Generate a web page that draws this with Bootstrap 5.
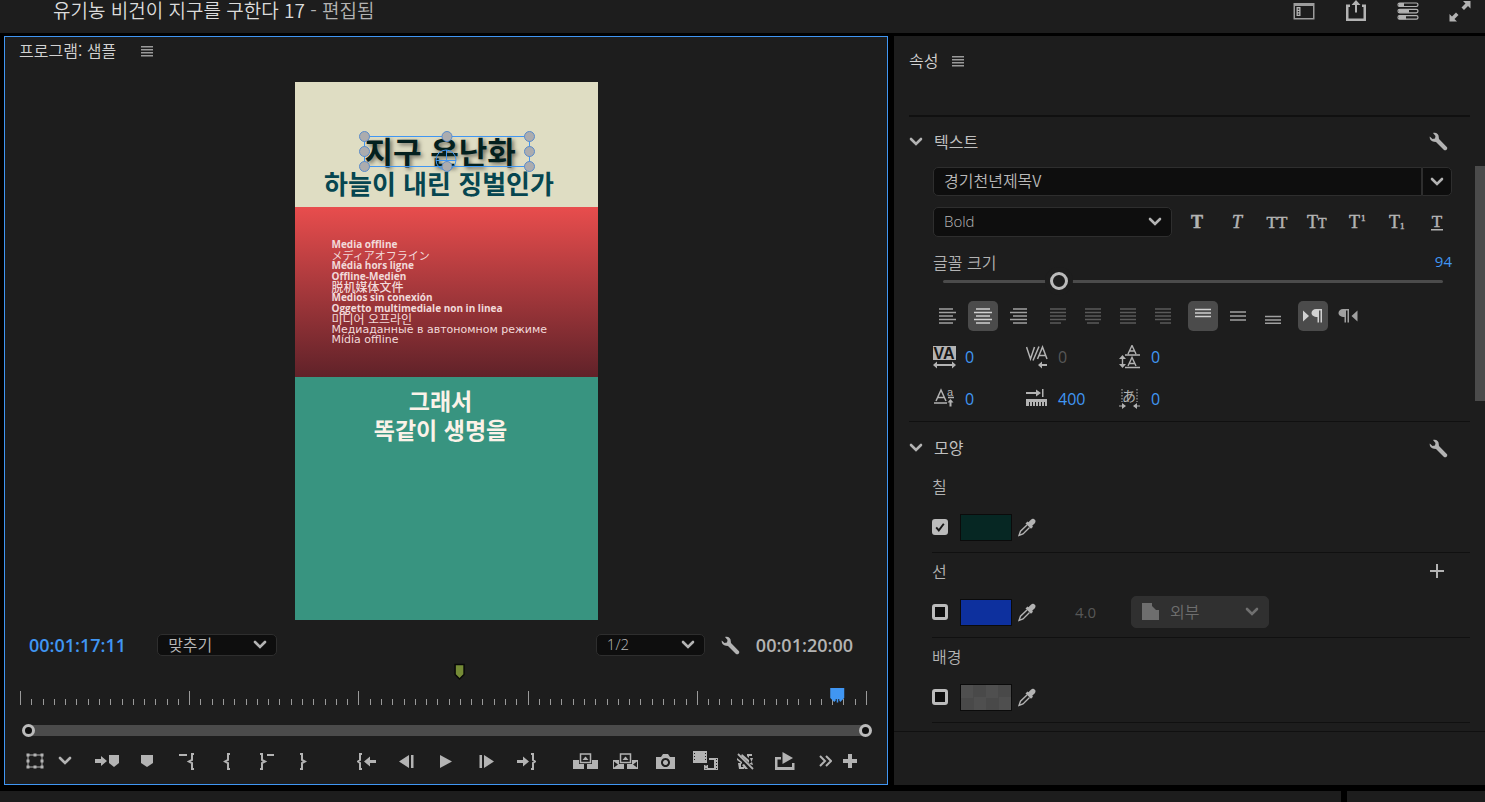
<!DOCTYPE html>
<html lang="ko" data-bs-theme="dark">
<head>
<meta charset="utf-8">
<meta name="viewport" content="width=device-width, initial-scale=1">
<title>유기농 비건이 지구를 구한다 17</title>
<link href="https://cdn.jsdelivr.net/npm/bootstrap@5.3.0/dist/css/bootstrap.min.css" rel="stylesheet">
<style>
  :root { --panel: #1d1d1d; --well: #0e0e0e; --line: #101010; --ink: #b3b3b3; --accent: #4096f3; --bar: #4b4b4b; }
  body { background: #000; color: var(--ink); font: 16px/24px "Noto Sans CJK KR", sans-serif; min-height: 100vh; }
  svg { display: block; fill: currentColor; }
  .stroke { fill: none; stroke: currentColor; }
  .pane { background: var(--panel); }
  .latin { font-family: "Open Sans", "Noto Sans CJK KR", sans-serif; }
  .blue { color: var(--accent); }

  .topbar { height: 33px; padding: 0 14px 11px 53px; }
  .topbar h1 { font-size: 19px; line-height: 20px; font-weight: 350; margin: 0; padding-bottom: 2px; color: #dcdcdc; }
  .topbar h1 span { color: var(--ink); }
  .topbar nav { gap: 30px; }
  .icon-btn { background: none; border: 0; padding: 0; color: inherit; display: inline-flex; align-items: center; justify-content: center; }
  .topbar .icon-btn { width: 22px; height: 22px; }

  .workspace { display: grid; grid-template-columns: 884fr 591fr; gap: 6px; padding: 3px 0 6px 4px; }
  .program { border: 1px solid var(--accent); }
  .pane-title { font-size: 16px; line-height: 27px; font-weight: 350; margin: 0; color: #d2d2d2; }
  .pane-title .icon-btn { color: #9a9a9a; height: 29px; }
  .program .pane-title { padding-left: 14px; gap: 25px; }

  .viewer { padding-top: 16px; }
  .frame { width: 303px; color: #fbf2e8; font-weight: 700; text-align: center; }
  .sky { height: 125px; background: #dfddc3; color: #064650; padding-top: 54px; }
  .fire { height: 170px; background: linear-gradient(#e84d4d, #602229); padding: 32px 0 0 37px; text-align: left; }
  .sea { height: 243px; background: #389480; padding: 9px 11px 0 0; font-size: 23px; line-height: 29px; }
  .picked { width: 165px; height: 31px; font-size: 31px; line-height: 29px; padding-left: 1px; color: #03201e; text-align: left; text-shadow: 2px 2px 4px #0008; white-space: nowrap; }
  .picked svg { left: -6px; top: -6px; }
  .subtitle { font-size: 26px; line-height: 32px; padding-right: 14px; }
  .offline { display: grid; grid-template-rows: repeat(10, 1fr); height: 107px; font: 700 10px/10px "Open Sans", sans-serif; color: #f2dada; margin: 0; }
  .offline .cjk { font-family: "Noto Sans CJK JP", sans-serif; font-size: 11px; font-weight: 400; }
  .offline .hans { font-family: "Noto Sans CJK SC", sans-serif; font-size: 12px; font-weight: 500; }
  .offline .hangul { font-family: "Noto Sans CJK KR", sans-serif; font-size: 12px; font-weight: 400; }
  .offline .wide { font: 400 11px/10px "DejaVu Sans", sans-serif; }

  .transport { padding: 0 34px 0 24px; height: 28px; margin-top: 10px; }
  .timecode { font: 600 18px/24px "Open Sans", sans-serif; }
  .pick { background-color: var(--well); border: 1px solid #2e2e2e; border-radius: 5px; color: #b8b8b8; font-size: 16px; font-weight: 350; line-height: 18px; padding: 0 32px 2px 10px;
    background-image: url("data:image/svg+xml,%3Csvg xmlns='http://www.w3.org/2000/svg' viewBox='0 0 14 10'%3E%3Cpath d='M2 2l5 5 5-5' fill='none' stroke='%23b3b3b3' stroke-width='2.6' stroke-linecap='round'/%3E%3C/svg%3E"); background-size: 14px 10px; background-position: right 9px center; }
  .fit { width: 120px; height: 22px; margin-left: 31px; }
  .res { width: 109px; height: 22px; font-size: 15px; }
  .style-pick { flex: 1; height: 30px; font-size: 15px; }
  .outer-pick { width: 138px; height: 32px; padding-left: 38px; }
  .outer-pick:disabled { background-color: #303030; border-color: #303030; color: #6e6e6e; opacity: 1;
    background-image: url("data:image/svg+xml,%3Csvg xmlns='http://www.w3.org/2000/svg' viewBox='0 0 14 10'%3E%3Cpath d='M2 2l5 5 5-5' fill='none' stroke='%23707070' stroke-width='2.6' stroke-linecap='round'/%3E%3C/svg%3E"); }
  .outer-icon { left: 11px; top: 7px; color: #6e6e6e; }

  .timeline { padding: 5px 21px 0 15px; }
  .ruler { overflow: visible; }
  .zoombar { height: 11px; background: var(--bar); margin: 20px 0 0 8px; }
  .zoombar button { width: 13px; height: 13px; border: 3px solid #bbb; border-radius: 50%; background: var(--well); padding: 0; top: -1px; }
  .zoombar .from { left: -6px; }
  .zoombar .to { right: -6px; }
  .tools { display: grid; grid-template-columns: 1fr auto 1fr; padding: 10px 0 8px; }
  .tools .icon-btn { width: 40px; height: 30px; }
  .tools .w30 { width: 30px; }
  .tools .w32 { width: 32px; }
  .tools .w18 { width: 18px; }
  .start { padding-left: 15px; }
  .start .w30 + .icon-btn:not(.w30) { margin-left: 7px; }
  .end { padding-left: 19px; }

  .props { min-width: 0; }
  .props-body { padding: 11px 5px 0 15px; }
  .props .pane-title { gap: 14px; height: 68px; align-items: flex-start; }
  .rule { height: 1px; background: var(--line); }
  .rule.thick { height: 2px; }
  .sect { padding: 0 22px 0 0; color: #c0c0c0; }
  .sect svg { color: var(--ink); }
  .sect h3 { font-size: 16px; line-height: 22px; font-weight: 400; color: inherit; margin: 0 auto 2px 11px; }
  .sect-text { height: 49px; }
  .sect-look { height: 52px; }
  .fields { padding: 1px 18px 0 24px; }
  .font-name { height: 29px; }
  .font-name .form-control { background: var(--well); border: 1px solid #2e2e2e; border-radius: 5px 0 0 5px; color: #b8b8b8; font-size: 16px; font-weight: 350; line-height: 20px; padding: 0 10px 3px; height: 29px; }
  .font-name .icon-btn { width: 30px; background: var(--well); border: 1px solid #2e2e2e; border-radius: 0 5px 5px 0; }
  .style-row { margin: 11px -5px 0 0; gap: 5px; }
  .style-row > div { font-family: "Liberation Serif", serif; }
  .style-row .icon-btn { width: 40px; height: 30px; }
  .thin-t text { stroke: currentColor; stroke-width: .5px; }
  .label { font-weight: 350; line-height: 24px; }
  .size-row { margin-top: 13px; }
  .num { font: 400 16px/22px "Open Sans", sans-serif; }
  .num.sm15 { font-size: 15px; }
  .range-wrap { padding: 0 9px 0 10px; height: 18px; margin-top: -2px; }
  .range-wrap input { appearance: none; width: 100%; height: 18px; background: none; margin: 0; display: block; }
  .range-wrap input::-webkit-slider-runnable-track { height: 3px; background: var(--bar); border-radius: 2px; }
  .range-wrap input::-webkit-slider-thumb { appearance: none; width: 18px; height: 18px; margin-top: -8px; border-radius: 50%; border: 3px solid #bbb; background: var(--panel); box-shadow: 0 0 0 5px var(--panel); }
  .aligns { gap: 10px; margin-top: 11px; }
  .aligns > div { display: flex; gap: 5px; }
  .aligns .icon-btn { width: 30px; height: 30px; border-radius: 5px; color: #a0a0a0; }
  .aligns .icon-btn.active { background: var(--bar); color: #d0d0d0; }
  .aligns .icon-btn:disabled { color: #5a5a5a; }
  .metrics { display: grid; grid-template-columns: repeat(3, 93px); row-gap: 18px; margin: 14px 0 10px; }
  .metrics > div { display: flex; align-items: center; gap: 8px; height: 24px; }
  .off { color: #575757; }
  .looks { padding-left: 23px; }
  .look { height: 84px; padding-right: 18px; }
  .look:first-child { height: 78px; }
  .look h4 { font-size: 16px; line-height: 24px; font-weight: 350; color: inherit; margin: 0; }
  .look-row { height: 32px; margin: 13px 0 9px; }
  .stroke-width { margin: 0 35px 0 39px; }
  .tick { appearance: none; width: 16px; height: 16px; border: 3px solid #bbb; border-radius: 3px; background: var(--well); margin: 0; }
  .tick:checked { background: #bbb url("data:image/svg+xml,%3Csvg xmlns='http://www.w3.org/2000/svg' viewBox='0 0 10 10'%3E%3Cpath d='M1.2 5.4l2.600 3 5-6.600' fill='none' stroke='%23181818' stroke-width='1.900'/%3E%3C/svg%3E") center / 10px 10px no-repeat; }
  .swatch { width: 52px; height: 27px; border: 1px solid #0b0b0b; padding: 0; margin: 0 6px 0 12px; border-radius: 0; }
  .green { background: #062723; }
  .royal { background: #0d309e; }
  .clear { background: repeating-conic-gradient(#494949 0 25%, #4f4f4f 0 50%) 0 0 / 25px 25px; }
  .scroller { width: 10px; height: 235px; margin-top: 130px; background: var(--bar); }
  .strip { height: 11px; gap: 6px; }
  .strip div:last-child { width: 138px; }
</style>
</head>
<body class="d-flex flex-column">

<svg class="d-none" xmlns="http://www.w3.org/2000/svg">
  <symbol id="menu" viewBox="0 0 12 11"><path d="M0 0h12v1.500H0zM0 3h12v1.500H0zM0 6h12v1.500H0zM0 9h12v1.500H0z"/></symbol>
  <symbol id="chev" viewBox="0 0 14 10"><path d="M2 2l5 5 5-5" fill="none" stroke="currentColor" stroke-width="2.600" stroke-linecap="round"/></symbol>
  <symbol id="wrench" viewBox="0 0 19 19"><path d="M4 1C7 0 10 2 9.800 5.500L10 7l8 8.200c1 1.800-1.200 4-3 2.800L7 10 5 9.700C2 9.500.200 7 .800 4.500L3.500 7 6 6.500l.500-2.500z"/></symbol>
  <symbol id="dropper" viewBox="0 0 18 19"><path d="M10.500 4.200C13 1.500 14 .300 15.800 1c2.500 1 2 3.500.200 5l-1.800 1.800.800 1-2 2L7.500 5.500l2-2z"/><path d="M9 7L2.500 13.200 1 17.500l4-1.500L11.500 9.500" fill="none" stroke="currentColor" stroke-width="1.400"/></symbol>
</svg>

<header class="topbar pane d-flex align-items-center">
  <h1 class="me-auto">유기농 비건이 지구를 구한다 17 <span>- 편집됨</span></h1>
  <nav class="d-flex" aria-label="작업 영역">
    <button class="icon-btn" aria-label="작업 영역"><svg width="22" height="18"><path d="M.500 1h21v16.500H.500zM2 4v12h18V4z" fill-rule="evenodd" opacity=".85"/><path d="M3.500 5h4v9h-4zM4.800 6.500v1.200h1.400V6.500zM4.800 9v1.200h1.400V9zM4.800 11.500v1.200h1.400v-1.200z" fill-rule="evenodd"/></svg></button>
    <button class="icon-btn" aria-label="내보내기"><svg width="22" height="22"><path d="M5 4.500H1v16.500h20V4.500h-4V7h1.500v11.500h-15V7H5z"/><path d="M10 12.500V5H6.500L11 0l4.500 5H12v7.500z"/></svg></button>
    <button class="icon-btn" aria-label="진행률"><svg width="22" height="20"><g class="stroke" stroke-width="1.200"><rect x="1" y="2" width="20" height="3.500" rx="1.700"/><rect x="1" y="8.300" width="20" height="3.500" rx="1.700"/><rect x="1" y="14.700" width="20" height="3.500" rx="1.700"/></g><path d="M2 2h5v3.500H2zM2 8.300h10v3.500H2zM2 14.700h7v3.500H2z"/></svg></button>
    <button class="icon-btn" aria-label="전체 화면"><svg width="22" height="22"><path d="M14 1h7.500v7.500L19 6l-4 4-2.500-2.500 4-4zM.500 21.500V14L3 16.500l4-4L9.500 15l-4 4L8 21.500z"/></svg></button>
  </nav>
</header>

<main class="workspace flex-grow-1">
  <section class="program pane d-flex flex-column">
    <h2 class="pane-title d-flex">프로그램: 샘플 <button class="icon-btn" aria-label="패널 메뉴"><svg width="12" height="11"><use href="#menu"/></svg></button></h2>

    <div class="viewer flex-grow-1 d-flex justify-content-center align-items-start">
      <div class="frame">
        <div class="sky">
          <div class="picked position-relative mx-auto">지구 온난화
            <svg class="position-absolute" width="178" height="43">
              <g fill="none" stroke="#4096f3" stroke-width="1"><rect x="6.500" y="6.500" width="165" height="30"/><circle cx="88" cy="30" r="10"/><path d="M78 30.500h20M88.500 20v20"/></g>
              <g fill="#acacae" stroke="#5a8ccc" stroke-width="1"><circle cx="6.500" cy="6.500" r="5"/><circle cx="89" cy="6.500" r="5"/><circle cx="171.500" cy="6.500" r="5"/><circle cx="6.500" cy="21.500" r="5"/><circle cx="171.500" cy="21.500" r="5"/><circle cx="6.500" cy="36.500" r="5"/><circle cx="89" cy="36.500" r="5"/><circle cx="171.500" cy="36.500" r="5"/></g>
            </svg>
          </div>
          <div class="subtitle">하늘이 내린 징벌인가</div>
        </div>
        <div class="fire"><div class="offline text-nowrap">
          <span>Media offline</span><span class="cjk" lang="ja">メディアオフライン</span><span>Média hors ligne</span><span>Offline-Medien</span><span class="hans" lang="zh">脱机媒体文件</span><span>Medios sin conexión</span><span>Oggetto multimediale non in linea</span><span class="hangul">미디어 오프라인</span><span class="wide" lang="ru">Медиаданные в автономном режиме</span><span class="wide">Mídia offline</span>
        </div></div>
        <div class="sea">그래서<br>똑같이 생명을</div>
      </div>
    </div>

    <div class="transport d-flex align-items-center">
      <span class="timecode blue">00:01:17:11</span>
      <select class="form-select pick fit" aria-label="확대/축소"><option>맞추기</option></select>
      <select class="form-select pick res latin ms-auto" aria-label="재생 해상도"><option>1/2</option></select>
      <button class="icon-btn mx-3" aria-label="설정"><svg width="19" height="19"><use href="#wrench"/></svg></button>
      <span class="timecode">00:01:20:00</span>
    </div>

    <div class="timeline">
      <svg class="ruler" width="100%" height="41" role="img" aria-label="시간 눈금자">
        <g id="ticks" fill="#9a9a9a" shape-rendering="crispEdges"></g>
        <svg x="51.900%" overflow="visible"><path d="M-4 .500h9v10L.500 15-4 10.500z" fill="#758b36" stroke="#080808" stroke-width="1.500"/></svg>
        <svg x="96.600%" y="23" overflow="visible"><path d="M-7 1h14v10l-4 4-1-1.500V12h-1v3.500h-1.500V12h-1v1.500L-3 15l-4-4z" fill="#4096f3"/></svg>
      </svg>
      <div class="zoombar position-relative"><button class="from position-absolute" aria-label="시작"></button><button class="to position-absolute" aria-label="끝"></button></div>
    </div>

    <div class="tools">
      <div class="start d-flex">
        <button class="icon-btn w30" aria-label="변형"><svg width="18" height="16"><path d="M2 2h14v12H2z" class="stroke"/><path d="M.500.500h3v3h-3zM7.500.500h3v3h-3zM14.500.500h3v3h-3zM.500 6.500h3v3h-3zM14.500 6.500h3v3h-3zM.500 12.500h3v3h-3zM7.500 12.500h3v3h-3zM14.500 12.500h3v3h-3z"/></svg></button>
        <button class="icon-btn w30" aria-label="더 보기"><svg width="14" height="10"><use href="#chev"/></svg></button>
        <button class="icon-btn" aria-label="마커로 이동"><svg width="24" height="14"><path d="M0 5h6V2l6 5-6 5V9H0zM14 1h10v8l-5 4-5-4z"/></svg></button>
        <button class="icon-btn" aria-label="마커 추가"><svg width="12" height="14"><path d="M0 1h12v8l-6 4-6-4z"/></svg></button>
        <button class="icon-btn" aria-label="시작 지우기"><svg width="16" height="17"><path d="M0 2h8M15 1h-2v6l-3 1.500L13 10v6h2" class="stroke" stroke-width="2"/></svg></button>
        <button class="icon-btn" aria-label="시작 표시"><svg width="8" height="17"><path d="M7 1H5v6L2 8.500 5 10v6h2" class="stroke" stroke-width="2"/></svg></button>
        <button class="icon-btn" aria-label="종료 지우기"><svg width="16" height="17"><path d="M8 2h7M1 1h2v6l3 1.500L3 10v6H1" class="stroke" stroke-width="2"/></svg></button>
        <button class="icon-btn w32" aria-label="종료 표시"><svg width="8" height="17"><path d="M1 1h2v6l3 1.500L3 10v6H1" class="stroke" stroke-width="2"/></svg></button>
      </div>
      <div class="d-flex">
        <button class="icon-btn" aria-label="시작으로"><svg width="19" height="17"><path d="M5 1H3v6L1 8.500 3 10v6h2" class="stroke" stroke-width="2"/><path d="M19 7h-6V3.500L7 8.500l6 5V10h6z"/></svg></button>
        <button class="icon-btn" aria-label="이전 프레임"><svg width="15" height="13"><path d="M10 0v13L0 6.500zM12 0h2.500v13H12z"/></svg></button>
        <button class="icon-btn" aria-label="재생"><svg width="12" height="13"><path d="M0 0l12 6.500L0 13z"/></svg></button>
        <button class="icon-btn" aria-label="다음 프레임"><svg width="15" height="13"><path d="M5 0v13l10-6.500zM.500 0H3v13H.500z"/></svg></button>
        <button class="icon-btn" aria-label="종료로"><svg width="19" height="17"><path d="M14 1h2v6l2 1.500L16 10v6h-2" class="stroke" stroke-width="2"/><path d="M0 7h6V3.500l6 5-6 5V10H0z"/></svg></button>
      </div>
      <div class="end d-flex">
        <button class="icon-btn" aria-label="제거"><svg width="25" height="17"><path d="M0 7h6v4h5v5H0zM25 7h-6v4h-5v5h11z"/><path d="M7.500 1h10v8.500h-10z" class="stroke" stroke-width="1.500"/><path d="M12.500 3.500L15.500 7h-6z"/></svg></button>
        <button class="icon-btn" aria-label="추출"><svg width="25" height="17"><path d="M0 7h6v4h5v5H0zM25 7h-6v4h-5v5h11zM1 8.500v6L5 11.500zM24 8.500v6l-4-3z" fill-rule="evenodd"/><path d="M7.500 1h10v8.500h-10z" class="stroke" stroke-width="1.500"/><path d="M12.500 3.500L15.500 7h-6z"/></svg></button>
        <button class="icon-btn" aria-label="프레임 내보내기"><svg width="19" height="15"><path d="M0 3h5l2-3h5l2 3h5v12H0zM9.500 4a4.500 4.500 0 1 0 .010 0zM9.500 6a2.500 2.500 0 1 1-.010 0z" fill-rule="evenodd"/></svg></button>
        <button class="icon-btn" aria-label="비교 보기"><svg width="25" height="20"><path d="M0 0h14v12H0zM1 2v1h1V2zM1 5v1h1V5zM1 8v1h1V8zM12 2v1h1V2zM12 5v1h1V5zM12 8v1h1V8zM16 7h9v12H11v-5h4v3h6V9h-5z" fill-rule="evenodd"/><path d="M13 14v5M23.500 8v11" stroke="#1d1d1d" stroke-dasharray="1 2"/></svg></button>
        <button class="icon-btn" aria-label="프록시 전환"><svg width="17" height="17"><path d="M1 1l15 15" class="stroke" stroke-width="1.800"/><path d="M5 1l7 6v3L4 3zM0 5l5 4v2L0 7zM7 11l4 5H8l-3-4zM10 1h5v2h-3v2l-2-2zM13 5h3l-1.500 4zM1 10h3v4h3v2H2zM12 11l3-2 1 3z"/></svg></button>
        <button class="icon-btn" aria-label="루프"><svg width="20" height="18"><path d="M0 5h6v2.500H2.500v7.500h14.500v-4h2.500v7H0z"/><path d="M7.500 0L18 6 7.500 12z"/></svg></button>
        <button class="icon-btn w32 ms-1" aria-label="더 많은 도구"><svg width="13" height="12"><path d="M1 1l5 5-5 5M7 1l5 5-5 5" class="stroke" stroke-width="2"/></svg></button>
        <button class="icon-btn w18" aria-label="단추 편집기"><svg width="14" height="14"><path d="M5 0h4v5h5v4H9v5H5V9H0V5h5z"/></svg></button>
      </div>
    </div>
  </section>

  <section class="props pane d-flex flex-column">
    <div class="d-flex">
      <div class="props-body flex-grow-1">
        <h2 class="pane-title d-flex">속성 <button class="icon-btn" aria-label="패널 메뉴"><svg width="12" height="11"><use href="#menu"/></svg></button></h2>
        <div class="rule thick"></div>

        <div class="sect sect-text d-flex align-items-center">
          <svg width="14" height="10"><use href="#chev"/></svg><h3>텍스트</h3>
          <button class="icon-btn" aria-label="텍스트 설정"><svg width="19" height="19"><use href="#wrench"/></svg></button>
        </div>

        <div class="fields">
          <div class="font-name d-flex">
            <input class="form-control" type="text" value="경기천년제목V" aria-label="글꼴">
            <button class="icon-btn flex-shrink-0" aria-label="글꼴 목록"><svg width="14" height="10"><use href="#chev"/></svg></button>
          </div>
          <div class="style-row d-flex">
            <select class="form-select pick style-pick latin" aria-label="글꼴 스타일"><option>Bold</option></select>
            <div class="d-flex thin-t">
              <button class="icon-btn" aria-label="굵게"><svg width="22" height="18"><text x="11" y="15" font-size="18" font-weight="700" text-anchor="middle">T</text></svg></button>
              <button class="icon-btn" aria-label="기울임꼴"><svg width="22" height="18"><text x="11" y="15" font-size="18" font-style="italic" text-anchor="middle">T</text></svg></button>
              <button class="icon-btn" aria-label="모두 대문자"><svg width="24" height="18"><text x="12" y="15" font-size="17" text-anchor="middle">TT</text></svg></button>
              <button class="icon-btn" aria-label="작은 대문자"><svg width="24" height="18"><text x="2" y="15" font-size="18">T<tspan font-size="14">T</tspan></text></svg></button>
              <button class="icon-btn" aria-label="위 첨자"><svg width="22" height="18"><text x="3" y="15" font-size="18">T</text><text x="15" y="8" font-size="9">1</text></svg></button>
              <button class="icon-btn" aria-label="아래 첨자"><svg width="22" height="18"><text x="3" y="15" font-size="18">T</text><text x="14" y="16" font-size="9">1</text></svg></button>
              <button class="icon-btn" aria-label="밑줄"><svg width="22" height="18"><text x="11" y="14" font-size="17" text-anchor="middle">T</text><path d="M5 16h12v1.500H5z"/></svg></button>
            </div>
          </div>

          <div class="size-row d-flex justify-content-between"><label class="label" for="size">글꼴 크기</label><span class="num sm15 blue">94</span></div>
          <div class="range-wrap"><input id="size" type="range" min="0" max="1000" value="222"></div>

          <div class="aligns d-flex">
            <div>
              <button class="icon-btn" aria-label="왼쪽 맞춤"><svg width="18" height="16"><path d="M0 1h14M0 4.500h17M0 8h14M0 11.500h17M0 15h14" class="stroke" stroke-width="1.400"/></svg></button>
              <button class="icon-btn active" aria-label="가운데 맞춤"><svg width="18" height="16"><path d="M2 1h14M0 4.500h18M2 8h14M0 11.500h18M2 15h14" class="stroke" stroke-width="1.400"/></svg></button>
              <button class="icon-btn" aria-label="오른쪽 맞춤"><svg width="18" height="16"><path d="M4 1h14M1 4.500h17M4 8h14M1 11.500h17M4 15h14" class="stroke" stroke-width="1.400"/></svg></button>
            </div>
            <div>
              <button class="icon-btn" disabled aria-label="양쪽 맞춤 왼쪽"><svg width="16" height="16"><path d="M0 1h16M0 4.500h16M0 8h16M0 11.500h16M0 15h11" class="stroke" stroke-width="1.400"/></svg></button>
              <button class="icon-btn" disabled aria-label="양쪽 맞춤 가운데"><svg width="16" height="16"><path d="M0 1h16M0 4.500h16M0 8h16M0 11.500h16M2 15h12" class="stroke" stroke-width="1.400"/></svg></button>
              <button class="icon-btn" disabled aria-label="양쪽 맞춤"><svg width="16" height="16"><path d="M0 1h16M0 4.500h16M0 8h16M0 11.500h16M0 15h16" class="stroke" stroke-width="1.400"/></svg></button>
              <button class="icon-btn" disabled aria-label="양쪽 맞춤 오른쪽"><svg width="16" height="16"><path d="M0 1h16M0 4.500h16M0 8h16M0 11.500h16M5 15h11" class="stroke" stroke-width="1.400"/></svg></button>
            </div>
            <div>
              <button class="icon-btn active" aria-label="위"><svg width="16" height="16"><path d="M0 1.500h16M0 5h16M0 8.500h16" class="stroke" stroke-width="1.400"/></svg></button>
              <button class="icon-btn" aria-label="중간"><svg width="16" height="16"><path d="M0 4h16M0 8h16M0 12h16" class="stroke" stroke-width="1.500"/></svg></button>
              <button class="icon-btn" aria-label="아래"><svg width="16" height="16"><path d="M0 8.500h16M0 12h16M0 15.300h16" class="stroke" stroke-width="1.500"/></svg></button>
            </div>
            <div>
              <button class="icon-btn active" aria-label="왼쪽에서 오른쪽"><svg width="20" height="14"><path d="M0 1.500v11L6 7zM13 0h6v13.500h-1.500V1.500H16v12h-1.500V8C10.500 8 8.500 6 8.500 4S10.500 0 13 0z"/></svg></button>
              <button class="icon-btn" aria-label="오른쪽에서 왼쪽"><svg width="20" height="14"><path d="M19.500 1.500v11L13.500 7zM5 0h6v13.500H9.500V1.500H8v12H6.500V8C2.500 8 .500 6 .500 4S2.500 0 5 0z"/></svg></button>
            </div>
          </div>

          <div class="metrics">
            <div><svg width="24" height="24" font-family="Liberation Sans, sans-serif"><path d="M0 1h23v14H0z"/><text x="11" y="14" font-size="16" font-weight="700" text-anchor="middle" fill="#151515">VA</text><path d="M0 20l4-3.500V19h15v-2.500l4 3.500-4 3.500V21H4v2.500z"/></svg><span class="num blue">0</span></div>
            <div><svg width="24" height="24"><path d="M.500 2l4 12 4-12M7 15.500L13 1.500M11.500 14L16.500 2l4.500 12M13 10.500h7" class="stroke" stroke-width="1.500"/><path d="M12 20l4-3.500V19h5v2h-5v2.500z"/></svg><span class="num off">0</span></div>
            <div><svg width="24" height="24"><path d="M9 9l4-8.500L17 9M10.500 6h5M6 10h15M9 21l4-8.500 4 8.500M10.500 18.500h5M6 22.500h15M3.500 12v9" class="stroke" stroke-width="1.400"/><path d="M0 14l3.500-4L7 14zM0 19h7l-3.500 4z"/></svg><span class="num blue">0</span></div>
            <div><svg width="24" height="24"><path d="M3 14L8 3l5 11M4.500 10.500h7M1 16h13M15 10.500h6" class="stroke" stroke-width="1.500"/><text x="17" y="9" font-size="11" text-anchor="middle" font-family="Liberation Sans, sans-serif">a</text><path d="M14.500 15.500l3-3.500 3 3.500h-2v4h-2v-4z"/></svg><span class="num blue">0</span></div>
            <div><svg width="24" height="24"><path d="M0 5h10V2.500L15 6l-5 3.500V7H0zM16 2h1.500v8H16zM0 12h21v7h-2v-4h-1v4h-2v-4h-1v4h-2v-4h-1v4h-2v-4H9v4H7v-4H6v4H4v-4H3v4H0z"/></svg><span class="num blue">400</span></div>
            <div><svg width="24" height="24"><text x="10" y="14" font-size="14" text-anchor="middle" font-family="Noto Sans CJK JP, sans-serif">あ</text><path d="M3 2v13M18 2v13" class="stroke" stroke-dasharray="1.500 1.500"/><path d="M0 18.500h3V16l4 3-4 3v-2.500H0zM21 18.500h-3V16l-4 3 4 3v-2.500h3z"/></svg><span class="num blue">0</span></div>
          </div>
        </div>

        <div class="rule"></div>
        <div class="sect sect-look d-flex align-items-center">
          <svg width="14" height="10"><use href="#chev"/></svg><h3>모양</h3>
          <button class="icon-btn" aria-label="모양 설정"><svg width="19" height="19"><use href="#wrench"/></svg></button>
        </div>
        <div class="looks">
          <div class="look d-flex flex-column justify-content-end">
            <h4>칠</h4>
            <div class="look-row d-flex align-items-center"><input class="tick" type="checkbox" checked aria-label="칠"><button class="swatch green" aria-label="칠 색상"></button><button class="icon-btn" aria-label="칠 스포이드"><svg width="18" height="19"><use href="#dropper"/></svg></button></div>
          </div>
          <div class="rule"></div>
          <div class="look d-flex flex-column justify-content-end">
            <div class="d-flex justify-content-between align-items-center pe-2"><h4>선</h4><button class="icon-btn" aria-label="선 추가"><svg width="14" height="14"><path d="M6 0h2v6h6v2H8v6H6V8H0V6h6z"/></svg></button></div>
            <div class="look-row d-flex align-items-center"><input class="tick" type="checkbox" aria-label="선"><button class="swatch royal" aria-label="선 색상"></button><button class="icon-btn" aria-label="선 스포이드"><svg width="18" height="19"><use href="#dropper"/></svg></button>
              <span class="num sm15 off stroke-width">4.0</span>
              <div class="position-relative"><select class="form-select pick outer-pick" disabled aria-label="선 위치"><option>외부</option></select><svg class="outer-icon position-absolute" width="17" height="17"><path d="M0 0h10v3l4 4h3v10H0z"/></svg></div>
            </div>
          </div>
          <div class="rule"></div>
          <div class="look d-flex flex-column justify-content-end">
            <h4>배경</h4>
            <div class="look-row d-flex align-items-center"><input class="tick" type="checkbox" aria-label="배경"><button class="swatch clear" aria-label="배경 색상"></button><button class="icon-btn" aria-label="배경 스포이드"><svg width="18" height="19"><use href="#dropper"/></svg></button></div>
          </div>
          <div class="rule"></div>
        </div>
      </div>
      <div class="scroller flex-shrink-0"></div>
    </div>
    <div class="rule mt-2"></div>
  </section>
</main>

<footer class="strip d-flex"><div class="pane flex-grow-1"></div><div class="pane"></div></footer>

<script>
  const ticks = document.getElementById('ticks');
  const STEPS = 75;
  for (let i = 0; i <= STEPS; i++) {
    const long = i % 15 === 0;
    const tick = document.createElementNS('http://www.w3.org/2000/svg', 'rect');
    tick.setAttribute('x', (i / STEPS * 100) + '%');
    tick.setAttribute('y', long ? 27 : 35);
    tick.setAttribute('width', 1);
    tick.setAttribute('height', long ? 14 : 6);
    ticks.append(tick);
  }
</script>
<script src="https://cdn.jsdelivr.net/npm/bootstrap@5.3.0/dist/js/bootstrap.bundle.min.js"></script>
</body>
</html>
